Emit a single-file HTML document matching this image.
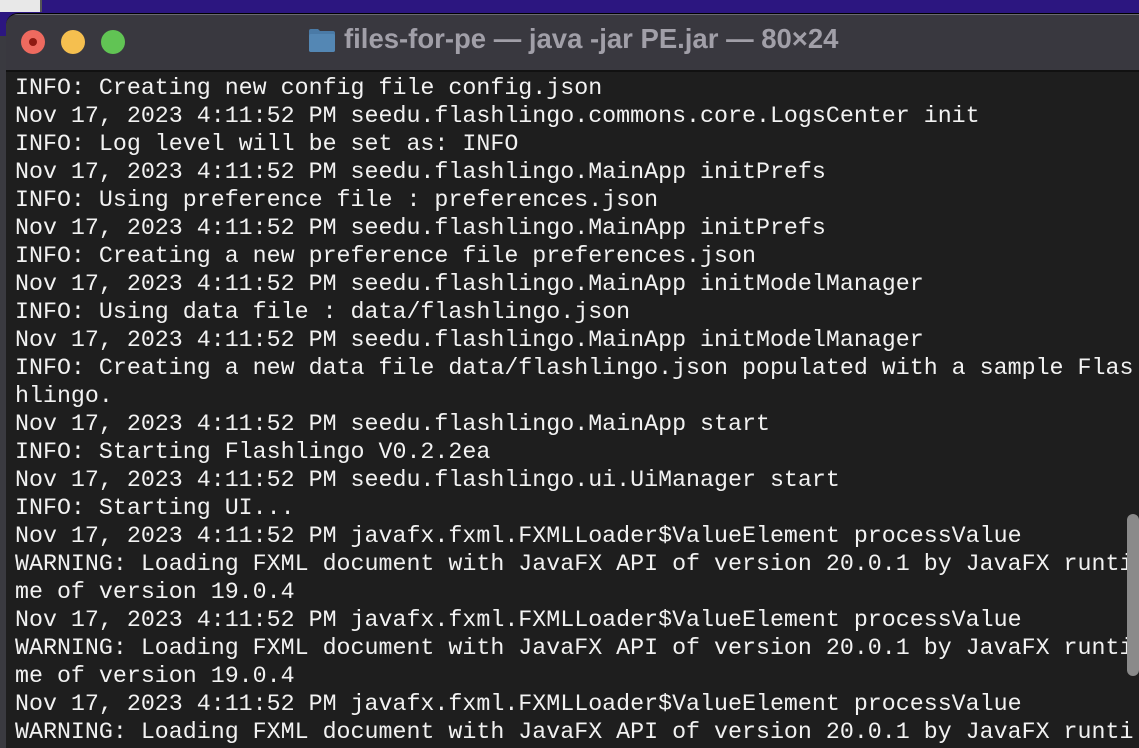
<!DOCTYPE html>
<html><head><meta charset="utf-8"><style>
html,body{margin:0;padding:0;width:1139px;height:748px;overflow:hidden;}
body{background:#2c1680;position:relative;font-family:"Liberation Mono",monospace;}
.thumb{position:absolute;left:0;top:0;width:40px;height:12px;background:#e8e8e8;border-right:2px solid #555;}
.leftstrip{position:absolute;left:0;top:36px;width:8px;height:712px;background:#3a3a40;}
.win{position:absolute;left:6px;top:13px;width:1150px;height:735px;background:#1e1e1e;border-radius:12px 12px 0 0;overflow:hidden;border-top:1px solid #000;}
.tb{position:absolute;left:0;top:0;right:0;height:55px;background:#39383f;border-top:1px solid #6a6a70;border-bottom:2px solid #111;}
.dot{position:absolute;top:15px;width:24px;height:24px;border-radius:50%;}
.title{position:absolute;left:338px;top:8px;color:#a19fa8;font-family:"Liberation Sans",sans-serif;font-weight:bold;font-size:27.5px;white-space:nowrap;}
.folder{position:absolute;left:302px;top:13px;width:28px;height:24px;}
pre{position:absolute;left:9px;top:60px;margin:0;color:#f2f2f2;font-family:"Liberation Mono",monospace;font-size:23.3px;line-height:28px;}
.sb{position:absolute;left:1121px;top:500px;width:12px;height:162px;border-radius:6px;background:#8a8a8a;}
</style></head><body>
<div class="thumb"></div>
<div class="leftstrip"></div>
<div class="win">
<div class="tb">
<div class="dot" style="left:15px;background:#ee6a5f"><div style="position:absolute;left:8px;top:8px;width:8px;height:8px;border-radius:50%;background:#8e1a12"></div></div>
<div class="dot" style="left:55px;background:#f5bf4f"></div>
<div class="dot" style="left:95px;background:#61c454"></div>
<svg class="folder" viewBox="0 0 28 24"><path d="M1 3 Q1 1 3 1 H10 L12 3 H25 Q27 3 27 5 V22 Q27 24 25 24 H3 Q1 24 1 22 Z" fill="#4a7aa6"/><rect x="1" y="6" width="26" height="18" rx="2" fill="#5487b4"/></svg>
<div class="title">files-for-pe — java -jar PE.jar — 80×24</div>
</div>
<pre>INFO: Creating new config file config.json
Nov 17, 2023 4:11:52 PM seedu.flashlingo.commons.core.LogsCenter init
INFO: Log level will be set as: INFO
Nov 17, 2023 4:11:52 PM seedu.flashlingo.MainApp initPrefs
INFO: Using preference file : preferences.json
Nov 17, 2023 4:11:52 PM seedu.flashlingo.MainApp initPrefs
INFO: Creating a new preference file preferences.json
Nov 17, 2023 4:11:52 PM seedu.flashlingo.MainApp initModelManager
INFO: Using data file : data/flashlingo.json
Nov 17, 2023 4:11:52 PM seedu.flashlingo.MainApp initModelManager
INFO: Creating a new data file data/flashlingo.json populated with a sample Flas
hlingo.
Nov 17, 2023 4:11:52 PM seedu.flashlingo.MainApp start
INFO: Starting Flashlingo V0.2.2ea
Nov 17, 2023 4:11:52 PM seedu.flashlingo.ui.UiManager start
INFO: Starting UI...
Nov 17, 2023 4:11:52 PM javafx.fxml.FXMLLoader$ValueElement processValue
WARNING: Loading FXML document with JavaFX API of version 20.0.1 by JavaFX runti
me of version 19.0.4
Nov 17, 2023 4:11:52 PM javafx.fxml.FXMLLoader$ValueElement processValue
WARNING: Loading FXML document with JavaFX API of version 20.0.1 by JavaFX runti
me of version 19.0.4
Nov 17, 2023 4:11:52 PM javafx.fxml.FXMLLoader$ValueElement processValue
WARNING: Loading FXML document with JavaFX API of version 20.0.1 by JavaFX runti</pre>
<div class="sb"></div>
</div>
</body></html>
